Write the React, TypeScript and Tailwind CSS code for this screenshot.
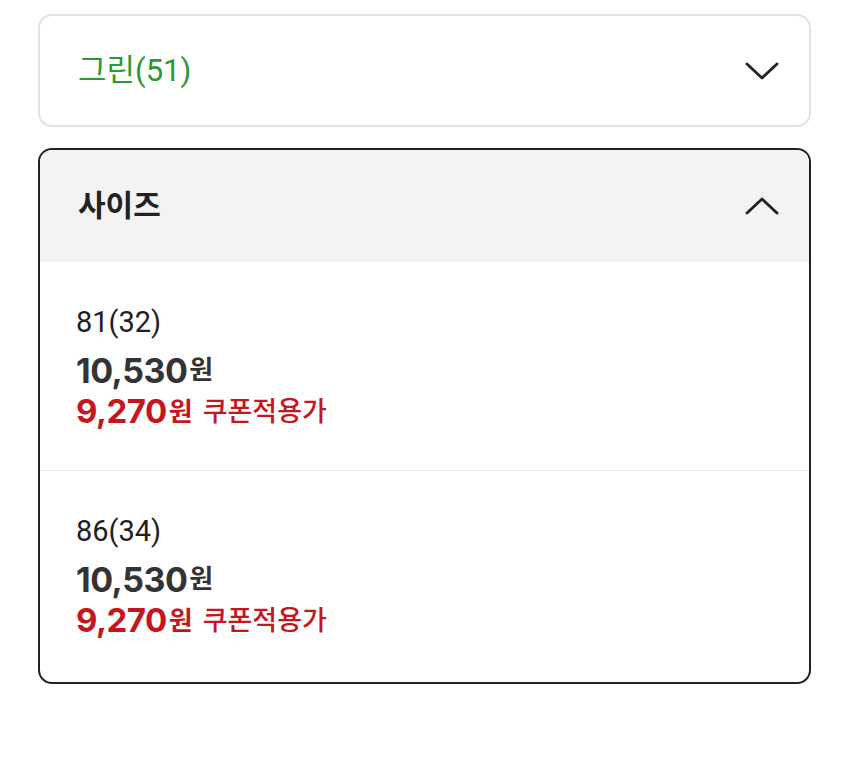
const sizes = [
  { label: "81(32)", price: "10,530", sale: "9,270" },
  { label: "86(34)", price: "10,530", sale: "9,270" },
];

const font = "font-['Roboto','Noto_Sans_CJK_KR',sans-serif]";

function Chevron({ up }: { up?: boolean }) {
  return (
    <svg width="36" height="22" viewBox="0 0 36 22" fill="none" stroke="#222" strokeWidth="2.8" strokeLinecap="round" strokeLinejoin="round">
      <path d={up ? "M3 18 L18 4 L33 18" : "M3 4 L18 18 L33 4"} />
    </svg>
  );
}

export default function App() {
  return (
    <div className={`min-h-[760px] bg-white px-[38px] pt-[14px] pr-[39px] ${font}`}>
      <div className="flex h-[113px] items-center justify-between rounded-[14px] border-2 border-[#e2e2e2] pl-[38px] pr-[29px]">
        <span className="text-[31px] leading-none text-[#2b9a31]">그린(51)</span>
        <Chevron />
      </div>

      <div className="mt-[21px] overflow-hidden rounded-[14px] border-2 border-[#222]">
        <div className="flex h-[112px] items-center justify-between bg-[#f3f3f3] pl-[38px] pr-[29px]">
          <span className="text-[30px] font-bold leading-none text-[#222]">사이즈</span>
          <Chevron up />
        </div>
        {sizes.map((s, i) => (
          <div
            key={i}
            className={`pl-[36px] pt-[44px] ${i === 0 ? "h-[209px] border-b border-[#e6e6e6]" : "h-[211px]"}`}
          >
            <div className="h-[32px] text-[29px] leading-[32px] text-[#1e1e1e]">{s.label}</div>
            <div className="mt-[10px] flex h-[44px] items-center text-[#333]">
              <span className="font-['Inter',sans-serif] text-[34px] font-bold tracking-[-0.5px]">{s.price}</span>
              <span className="ml-[2px] text-[26px] font-bold">원</span>
            </div>
            <div className="flex h-[40px] items-center text-[#c4161c]">
              <span className="font-['Inter',sans-serif] text-[33px] font-bold tracking-[-0.5px]">{s.sale}</span>
              <span className="ml-[2px] text-[26px] font-bold">원</span>
              <span className="ml-[10px] text-[27px] font-medium">쿠폰적용가</span>
            </div>
          </div>
        ))}
      </div>
    </div>
  );
}
